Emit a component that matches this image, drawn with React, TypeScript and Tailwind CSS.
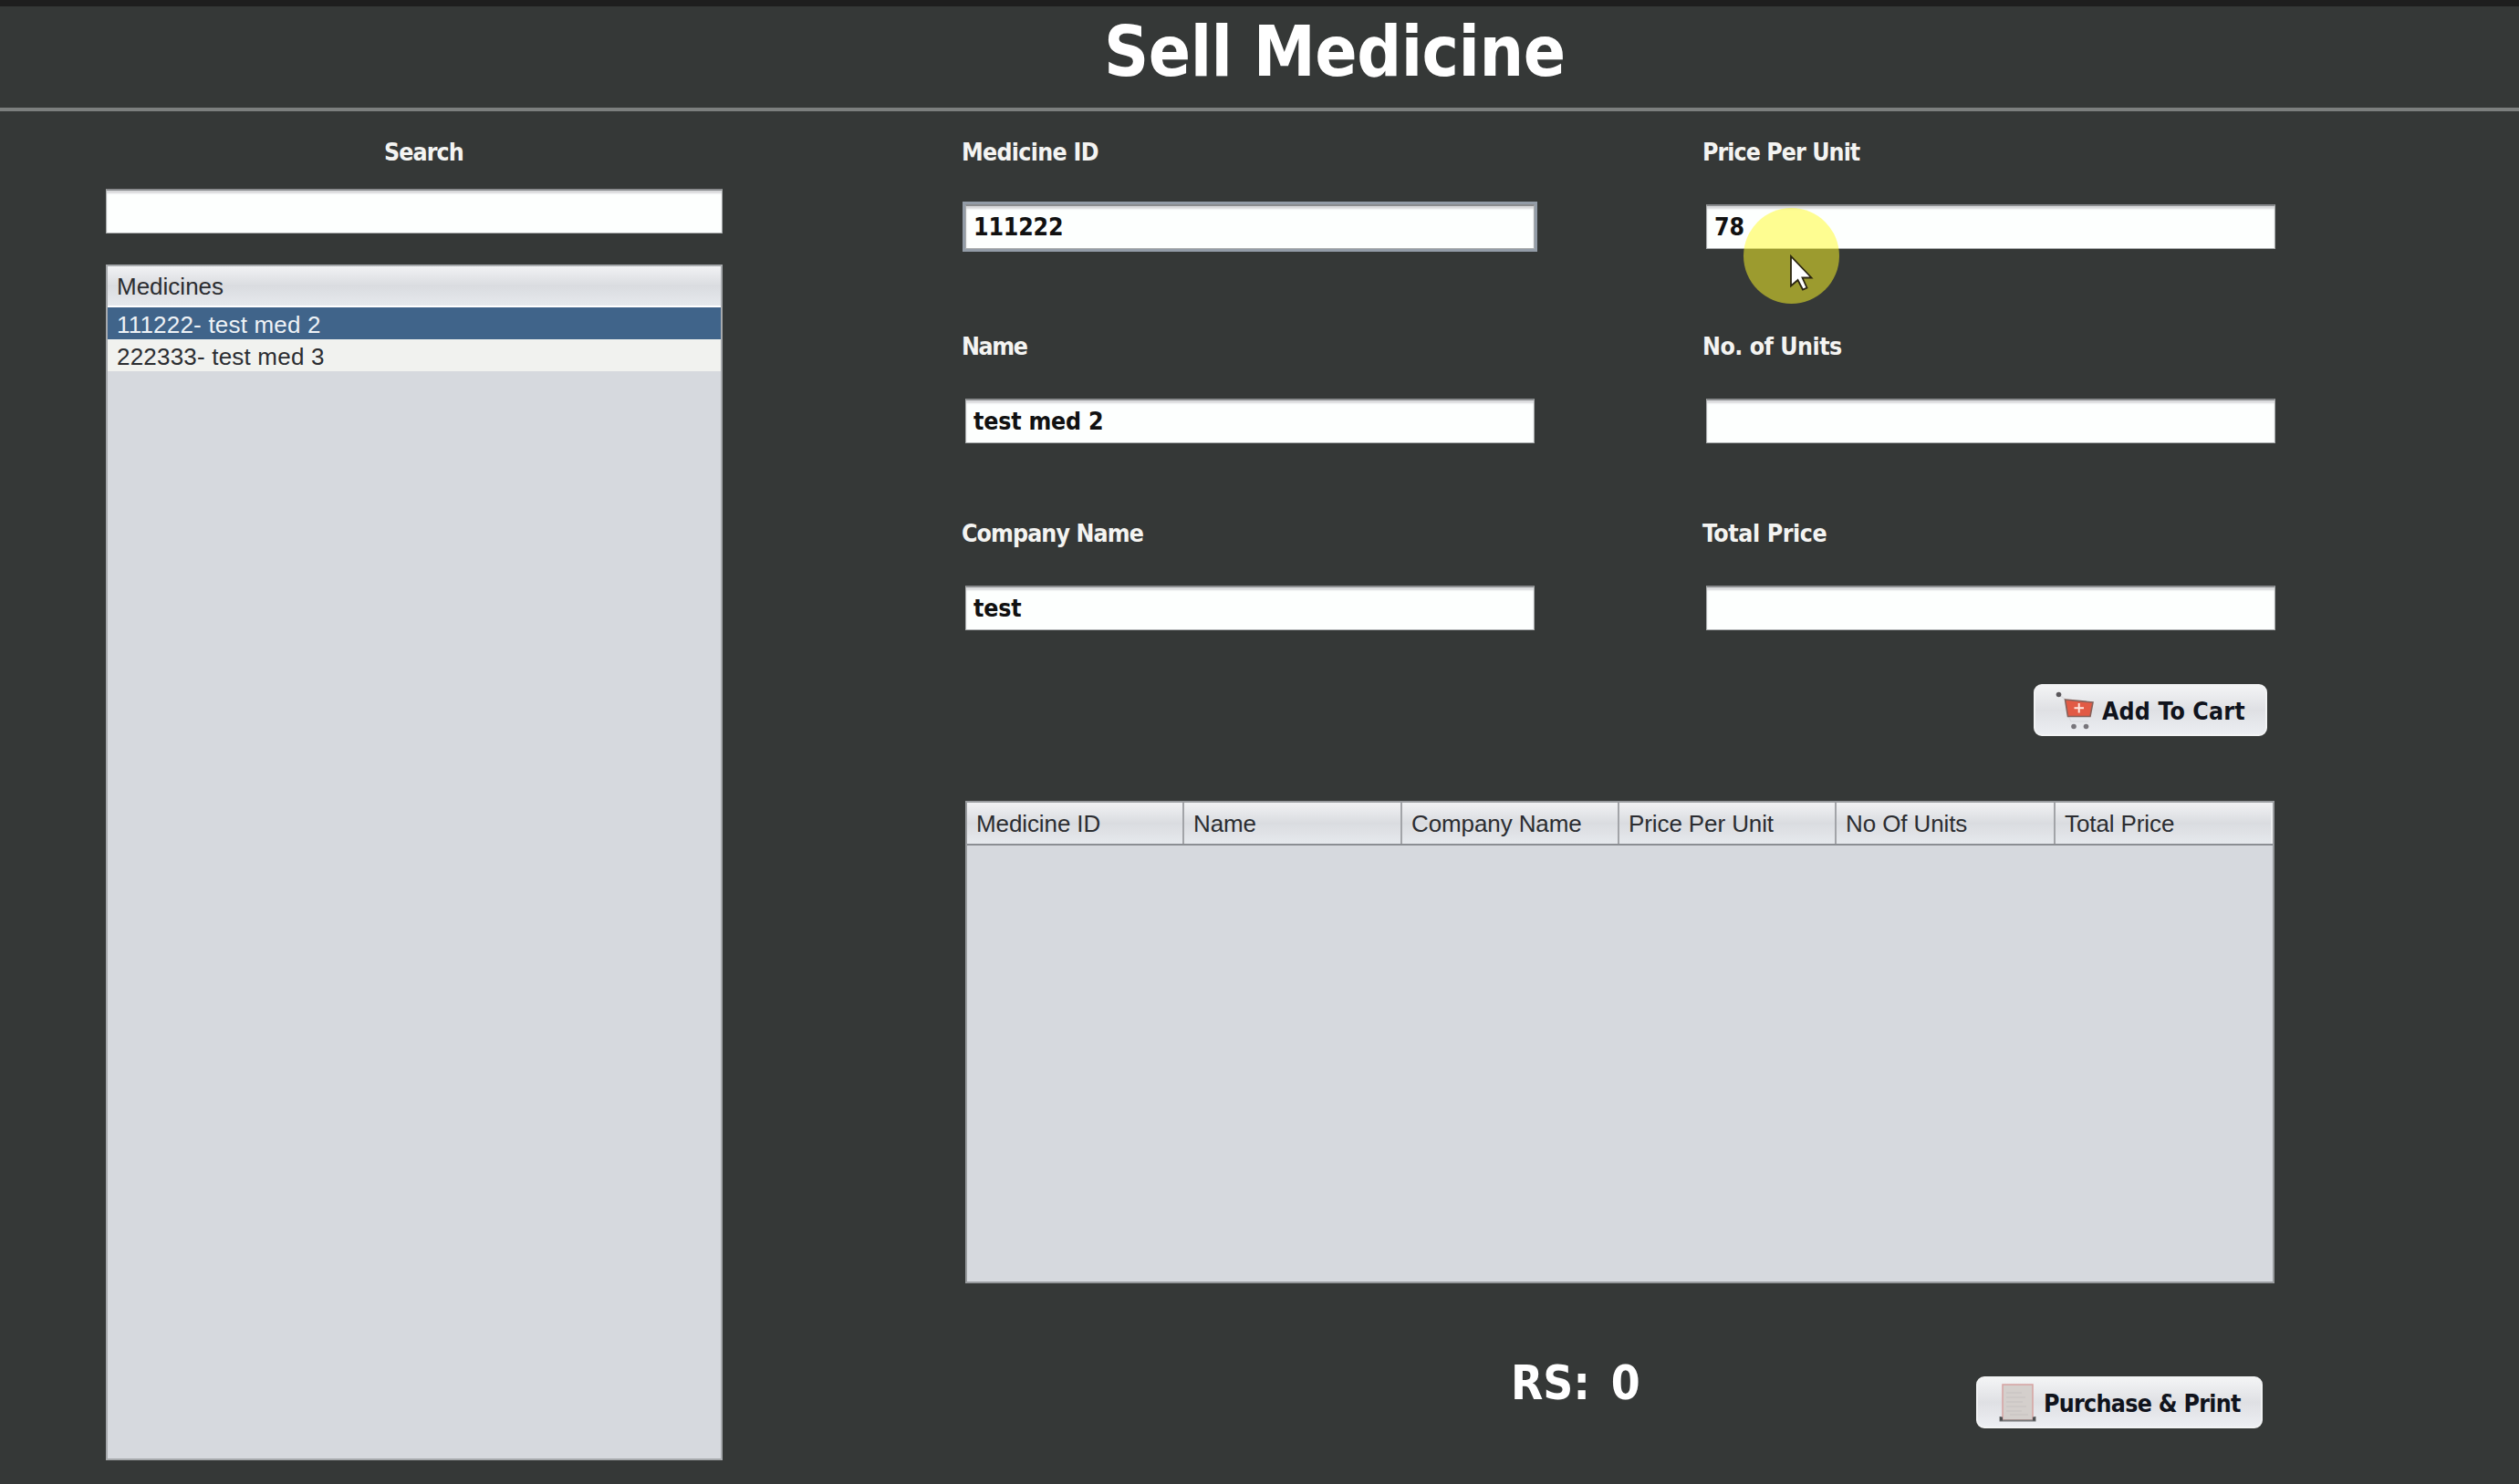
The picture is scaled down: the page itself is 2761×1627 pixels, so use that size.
import clsx from 'clsx';

const medicines = [
  { title: '111222- test med 2', selected: true },
  { title: '222333- test med 3', selected: false },
];

const columns = [
  { title: 'Medicine ID', width: 'w-[238px]' },
  { title: 'Name', width: 'w-[239px]' },
  { title: 'Company Name', width: 'w-[238px]' },
  { title: 'Price Per Unit', width: 'w-[238px]' },
  { title: 'No Of Units', width: 'w-[240px]' },
  { title: 'Total Price', width: 'flex-1' },
];

const labelFont = 'font-["DejaVu_Sans_Condensed","DejaVu_Sans",sans-serif] font-bold text-[26.5px] leading-8 whitespace-pre';
const tableFont = 'font-["Liberation_Sans",Arial,sans-serif] text-[26px] leading-[35px] text-[#2b2d31]';
const headerFill = 'bg-linear-to-b from-[#f1f2f4] via-[#dadce0] to-[#e6e9ed]';
const buttonStyle = 'h-[57px] flex items-center rounded-[9px] border-2 border-[#f2f3f4] bg-linear-to-b from-[#f3f4f5] via-[#dfe0e4] to-[#eceef2]';

function TextBox({ value, focused }: { value?: string; focused?: boolean }) {
  return (
    <div
      className={clsx(
        labelFont,
        'h-[49px] bg-[#fdfffe] border border-t-2 border-[#a9acad] border-t-[#8a8c8e] pl-[8px] pt-[7px] text-[#111] tracking-[-0.2px] shadow-[inset_0_3px_2px_#d9dadc]',
        focused && 'ring-3 ring-[#939ca7]',
      )}
    >
      {value}
    </div>
  );
}

type FieldProps = { label: string; tracking: string; value?: string; focused?: boolean };

function Field({ label, tracking, value, focused }: FieldProps) {
  return (
    <div className="flex flex-col gap-[41px]">
      <div className={clsx(labelFont, tracking, 'pl-[2px] text-[#f4f4f2]')}>{label}</div>
      <div className="ml-[6px] w-[624px]">
        <TextBox value={value} focused={focused} />
      </div>
    </div>
  );
}

function CartIcon() {
  return (
    <svg width="44" height="44" viewBox="0 0 44 44" fill="none">
      <path d="M4 5L10 9L14 28L17 34H36" stroke="#d8dade" strokeWidth="1.2" />
      <circle cx="3.5" cy="4.5" r="2.8" fill="#5a575b" />
      <path d="M10.5 10L41 13L38 28.5H13.5Z" fill="#e25a45" stroke="#84625c" strokeWidth="1.6" />
      <path d="M25.700 14V24.500M20.500 19.200H31" stroke="#ffe6df" strokeWidth="2" />
      <circle cx="20" cy="39.500" r="2.800" fill="#77757b" />
      <circle cx="33.500" cy="39.500" r="2.800" fill="#77757b" />
    </svg>
  );
}

function ReceiptIcon() {
  return (
    <svg width="41" height="42" viewBox="0 0 41 42" fill="none">
      <rect x="4" y="1" width="33" height="39" fill="#d4cfcc" stroke="#d6a3a1" strokeWidth="1.5" />
      <path d="M8 10H25M8 15H29M8 20H26M8 25H30M8 30H25M12 34H32" stroke="#c6c1c0" strokeWidth="1.2" />
      <path d="M1.5 36V40.5H39.5V36" stroke="#77797b" strokeWidth="2" />
      <path d="M1 38.5H4M37 38.5H40" stroke="#4e5052" strokeWidth="4" />
    </svg>
  );
}

function Pointer() {
  return (
    <div className="absolute left-[1911px] top-[228px] w-[105px] h-[105px] rounded-full bg-[#fffb28]/51">
      <svg className="absolute left-[50px] top-[50px]" width="28" height="42" viewBox="0 0 28 42">
        <path d="M2 3V35.500L9.500 29L15 39.500L19.500 37.500L14.500 26.500H24.500Z" fill="#fff" stroke="#2a2410" strokeWidth="1.8" />
      </svg>
    </div>
  );
}

export default function App() {
  return (
    <div className="relative flex flex-col w-[2761px] h-[1627px] overflow-hidden bg-[#353837]">
      <div className="h-[7px] bg-[#1e1e1e]" />
      <header className="h-[111px] pl-[1210px]">
        <h1 className='font-["DejaVu_Sans_Condensed","DejaVu_Sans",sans-serif] font-bold text-[76px] leading-[100px] tracking-[-0.5px] text-white whitespace-nowrap'>
          Sell Medicine
        </h1>
      </header>
      <div className="h-1 bg-[#7c7f7e]" />

      <main className="flex flex-1 pl-[116px] pt-[29px]">
        {/* Search + medicine list */}
        <section className="w-[676px] flex flex-col">
          <div className={clsx(labelFont, 'tracking-[-0.9px] text-[#f4f4f2] pl-[305px]')}>Search</div>
          <div className="mt-[24px]">
            <TextBox />
          </div>
          <div className={clsx(tableFont, 'mt-[34px] h-[1311px] border-2 border-[#a6a9ac] bg-[#d6d9de]')}>
            <div className={clsx(headerFill, 'h-[45px] pl-[10px] pt-[5px] border-b-2 border-white')}>Medicines</div>
            {medicines.map((medicine) => (
              <div
                key={medicine.title}
                className={clsx(
                  'h-[35px] pl-[10px] pt-[2px] tracking-[0.2px]',
                  medicine.selected ? 'bg-[#40648a] text-[#eef2f6]' : 'bg-[#f1f2ef]',
                )}
              >
                {medicine.title}
              </div>
            ))}
          </div>
        </section>

        {/* Details + cart */}
        <section className="ml-[260px] w-[1442px] flex flex-col">
          <div className="flex gap-[182px]">
            <div className="flex flex-col">
              <Field label="Medicine ID" tracking="tracking-[-0.7px]" value="111222" focused />
              <div className="mt-[91px]">
                <Field label="Name" tracking="tracking-[-1.4px]" value="test med 2" />
              </div>
              <div className="mt-[83px]">
                <Field label="Company Name" tracking="tracking-[-0.9px]" value="test" />
              </div>
            </div>
            <div className="flex flex-col">
              <Field label="Price Per Unit" tracking="tracking-[-0.95px]" value="78" />
              <div className="mt-[91px]">
                <Field label="No. of Units" tracking="tracking-[-0.5px]" />
              </div>
              <div className="mt-[83px]">
                <Field label="Total Price" tracking="tracking-[-0.4px]" />
              </div>
            </div>
          </div>

          <button className={clsx(buttonStyle, 'self-end mr-[9px] mt-[59px] w-[256px] pl-[22px]')}>
            <CartIcon />
            <span className={clsx(labelFont, 'ml-[7px] pt-[2px] tracking-[0.15px] text-[#10131c]')}>Add To Cart</span>
          </button>

          <div className={clsx(tableFont, 'ml-[6px] mt-[71px] h-[529px] w-[1435px] border-2 border-[#989b9e] bg-[#d6d9de]')}>
            <div className={clsx(headerFill, 'flex h-[47px] border-b-2 border-[#8b8e93]')}>
              {columns.map((col) => (
                <div
                  key={col.title}
                  className={clsx(
                    col.width,
                    'pl-[10px] pt-[6px] tracking-[-0.1px] border-r-2 border-[#a2a4a8] last:border-[#eff1f3] whitespace-nowrap',
                  )}
                >
                  {col.title}
                </div>
              ))}
            </div>
          </div>

          <div className="flex items-start">
            <div className='ml-[604px] mt-[80px] w-[510px] font-["DejaVu_Sans_Condensed","DejaVu_Sans",sans-serif] font-bold text-[51px] leading-[60px] text-white whitespace-pre'>
              RS: <span className="ml-[7px]">0</span>
            </div>
            <button className={clsx(buttonStyle, 'mt-[102px] w-[314px] pl-[23px]')}>
              <ReceiptIcon />
              <span className={clsx(labelFont, 'ml-[8px] pt-[2px] tracking-[-0.7px] text-[#10131c]')}>Purchase &amp; Print</span>
            </button>
          </div>
        </section>
      </main>

      <Pointer />
    </div>
  );
}
